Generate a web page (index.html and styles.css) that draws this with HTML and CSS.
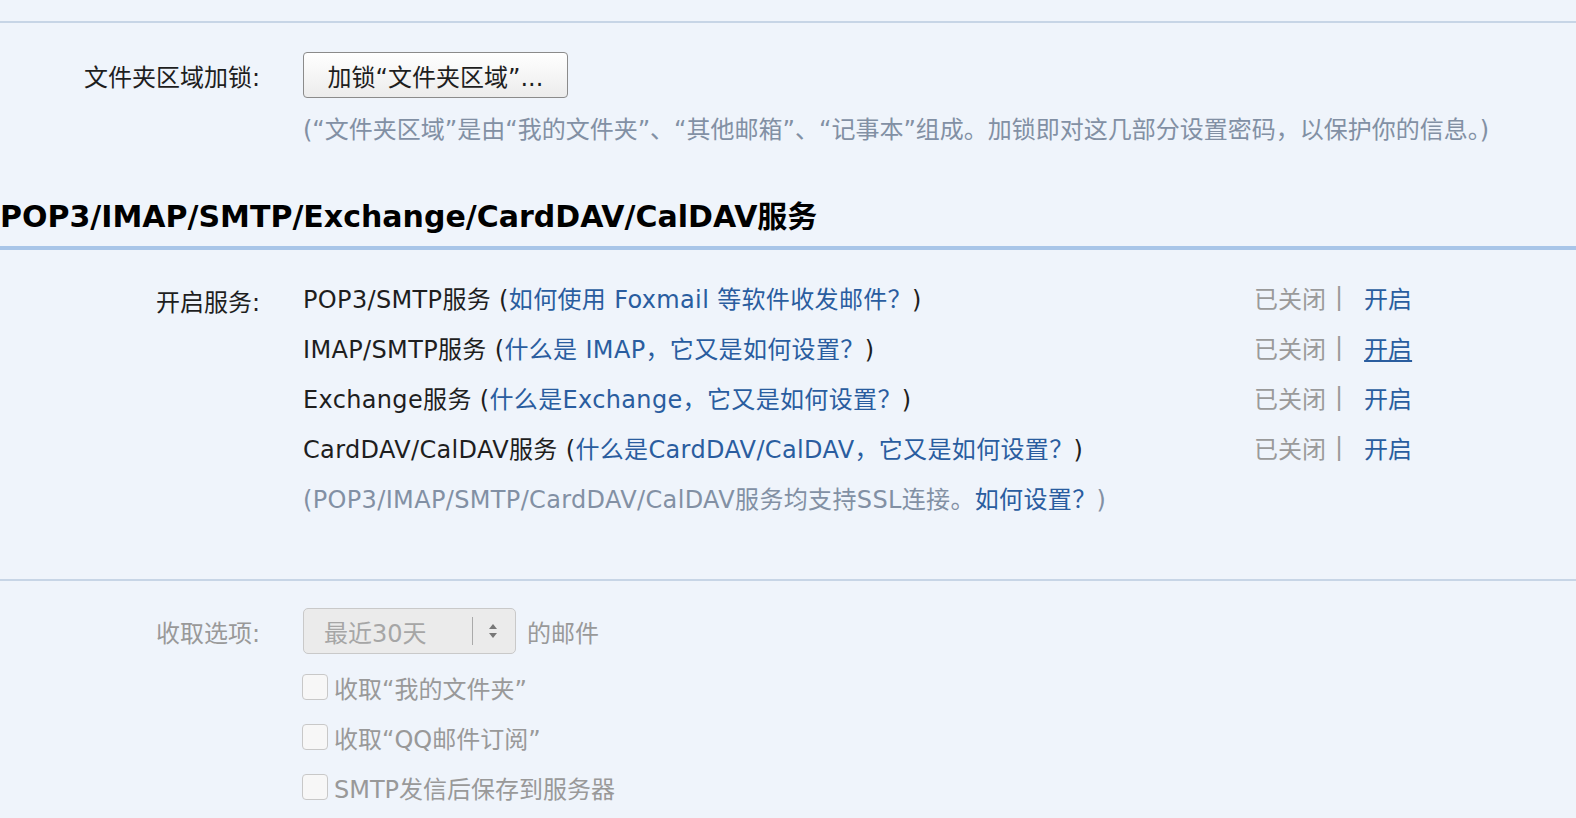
FILE: index.html
```html
<!DOCTYPE html>
<html lang="zh-CN">
<head>
<meta charset="utf-8">
<title>设置</title>
<link rel="stylesheet" href="styles.css">
</head>
<body>
<div class="page">
  <div class="rule"></div>
  <div class="form-row lock-row">
    <div class="label">文件夹区域加锁:</div>
    <div class="field">
      <button class="btn" type="button">加锁“文件夹区域”...</button>
    </div>
  </div>
  <div class="form-row note-row">
    <div class="label"></div>
    <div class="note">(“文件夹区域”是由“我的文件夹”、“其他邮箱”、“记事本”组成。加锁即对这几部分设置密码，以保护你的信息。)</div>
  </div>

  <h2 class="section-title">POP3/IMAP/SMTP/Exchange/CardDAV/CalDAV服务</h2>

  <div class="services">
    <div class="label svc-label">开启服务:</div>
    <div class="svc">POP3/SMTP服务 (<a class="link" href="#">如何使用 Foxmail 等软件收发邮件？</a>)</div>
    <div class="status"><span class="off">已关闭</span><span class="sep">|</span><a class="link" href="#">开启</a></div>

    <div class="label"></div>
    <div class="svc">IMAP/SMTP服务 (<a class="link" href="#">什么是 IMAP，它又是如何设置？</a>)</div>
    <div class="status"><span class="off">已关闭</span><span class="sep">|</span><a class="link hover" href="#">开启</a></div>

    <div class="label"></div>
    <div class="svc">Exchange服务 (<a class="link" href="#">什么是Exchange，它又是如何设置？</a>)</div>
    <div class="status"><span class="off">已关闭</span><span class="sep">|</span><a class="link" href="#">开启</a></div>

    <div class="label"></div>
    <div class="svc">CardDAV/CalDAV服务 (<a class="link" href="#">什么是CardDAV/CalDAV，它又是如何设置？</a>)</div>
    <div class="status"><span class="off">已关闭</span><span class="sep">|</span><a class="link" href="#">开启</a></div>

    <div class="label"></div>
    <div class="svc note">(POP3/IMAP/SMTP/CardDAV/CalDAV服务均支持SSL连接。<a class="link" href="#">如何设置？</a>)</div>
    <div class="status"></div>
  </div>

  <div class="rule rule-2"></div>

  <div class="options disabled">
    <div class="form-row select-row">
      <div class="label">收取选项:</div>
      <div class="field">
        <div class="select">
          <span class="select-text">最近30天</span>
          <span class="select-div"></span>
          <svg class="select-arrows" width="10" height="16" viewBox="0 0 10 16"><path d="M5 1 L9 6 L1 6 Z" fill="#777"/><path d="M5 15 L9 10 L1 10 Z" fill="#777"/></svg>
        </div>
        <span class="after">的邮件</span>
      </div>
    </div>
    <div class="form-row check-row first-check">
      <div class="label"></div>
      <label class="check"><span class="box"></span>收取“我的文件夹”</label>
    </div>
    <div class="form-row check-row">
      <div class="label"></div>
      <label class="check"><span class="box"></span>收取“QQ邮件订阅”</label>
    </div>
    <div class="form-row check-row">
      <div class="label"></div>
      <label class="check"><span class="box"></span>SMTP发信后保存到服务器</label>
    </div>
  </div>
</div>
</body>
</html>
```
FILE: styles.css
```css
html, body {
  margin: 0;
  padding: 0;
  background: #eff4fb;
}
body {
  font-family: "DejaVu Sans", "Noto Sans CJK SC", sans-serif;
  font-size: 24px;
  color: #1e1e1e;
  overflow: hidden;
}
.page {
  width: 1576px;
  height: 818px;
}
.rule {
  height: 2px;
  background: #c7d5e6;
  margin-top: 21px;
}
.form-row {
  display: grid;
  grid-template-columns: 303px 1fr;
  align-items: center;
}
.label {
  text-align: right;
  padding-right: 43px;
  white-space: nowrap;
}
.lock-row {
  margin-top: 29px;
  height: 46px;
}
.btn {
  width: 265px;
  height: 46px;
  border: 1px solid #8b8b8b;
  border-radius: 4px;
  background: linear-gradient(#ffffff, #ececec);
  font-family: inherit;
  font-size: 24px;
  color: #1e1e1e;
  padding: 0;
}
.note-row {
  margin-top: 17px;
  height: 30px;
  line-height: 30px;
}
.note {
  color: #8290a4;
  white-space: nowrap;
}
.section-title {
  margin: 50px 0 0 0;
  height: 44px;
  line-height: 44px;
  font-size: 30px;
  font-weight: bold;
  color: #000;
  border-bottom: 4px solid #a8c5e8;
  padding-bottom: 7px;
  box-sizing: content-box;
}
.services {
  display: grid;
  grid-template-columns: 303px 951px auto;
  grid-auto-rows: 50px;
  align-items: center;
  margin-top: 22px;
}
.svc {
  white-space: nowrap;
  letter-spacing: 0.35px;
}
.svc-label {
  padding-top: 6px;
}
.link {
  color: #2a5d9f;
  text-decoration: none;
}
.link.hover {
  text-decoration: underline;
}
.status {
  white-space: nowrap;
  display: flex;
  align-items: center;
}
.off {
  color: #9a9a9a;
}
.sep {
  color: #9a9a9a;
  margin: 0 21px 0 9px;
}
.rule-2 {
  margin-top: 57px;
}
.options {
  color: #999;
  margin-top: 27px;
}
.select-row {
  height: 46px;
  margin-top: 2px;
}
.field {
  display: flex;
  align-items: center;
}
.select {
  width: 213px;
  height: 46px;
  box-sizing: border-box;
  border: 1px solid #c9c9c9;
  border-radius: 5px;
  background: #ebebeb;
  display: flex;
  align-items: center;
}
.select-text {
  color: #a6a6a6;
  padding-left: 20px;
  width: 148px;
}
.select-div {
  width: 1px;
  height: 28px;
  background: #aaa;
}
.select-arrows {
  margin-left: 15px;
}
.after {
  margin-left: 11px;
  color: #999;
}
.check-row {
  height: 50px;
}
.first-check {
  margin-top: 8px;
}
.check {
  display: flex;
  align-items: center;
  color: #999;
  white-space: nowrap;
}
.box {
  width: 26px;
  height: 26px;
  border: 1px solid #c8c8c8;
  border-radius: 4px;
  background: #f7f7f7;
  margin-right: 6px;
  box-sizing: border-box;
  margin-left: -1px;
}
```
